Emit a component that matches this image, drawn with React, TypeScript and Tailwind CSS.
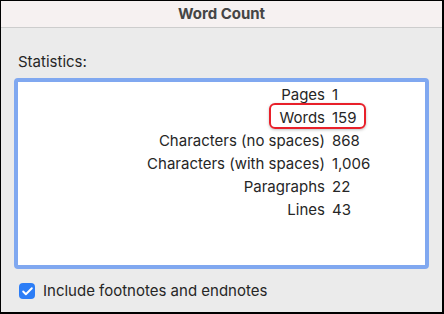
import { Check } from "lucide-react";

const STATS = [
  { label: "Pages", value: "1" },
  { label: "Words", value: "159" },
  { label: "Characters (no spaces)", value: "868" },
  { label: "Characters (with spaces)", value: "1,006" },
  { label: "Paragraphs", value: "22" },
  { label: "Lines", value: "43" },
];

export default function App() {
  return (
    <div
      className="w-[444px] h-[314px] flex flex-col border-l border-t border-r-2 border-b-2 border-black bg-[#ebebeb] text-[#262626] overflow-hidden"
      style={{ fontFamily: "Inter, 'Noto Sans', sans-serif" }}
    >
      {/* Title bar */}
      <div className="h-[27px] shrink-0 flex items-center justify-center bg-[#f6f1f1] border-b border-[#cdcdcd]">
        <span className="text-[15px] font-bold text-[#454545]">Word Count</span>
      </div>

      {/* Body */}
      <div className="flex flex-col px-[13px] pt-[25px]">
        <div className="pl-[4px] text-[15px] leading-[18px]">Statistics:</div>

        <div className="relative mt-[7px] h-[191px] rounded-[4px] border-[4px] border-[#80a8f0] bg-white pt-[2px]">
          {/* red highlight around "Words" */}
          <div className="absolute left-[251px] top-[21px] w-[97px] h-[26px] rounded-[6px] border-2 border-[#e8202a] shadow-[0_1px_3px_rgba(0,0,0,0.25)]" />

          <div className="grid grid-cols-[307px_auto] gap-x-[7px]">
            {STATS.map(({ label, value }) => (
              <div key={label} className="contents">
                <div className="h-[23px] flex items-center justify-end text-[15px]">{label}</div>
                <div className="h-[23px] flex items-center text-[15px]">{value}</div>
              </div>
            ))}
          </div>
        </div>

        <div className="mt-[13px] flex items-center gap-[8px] pl-[5px]">
          <div className="w-[16px] h-[16px] rounded-[4px] bg-[#2c7df6] flex items-center justify-center">
            <Check className="w-[13px] h-[13px] text-white" strokeWidth={3.5} />
          </div>
          <span className="text-[15px] leading-[18px]">Include footnotes and endnotes</span>
        </div>
      </div>
    </div>
  );
}
